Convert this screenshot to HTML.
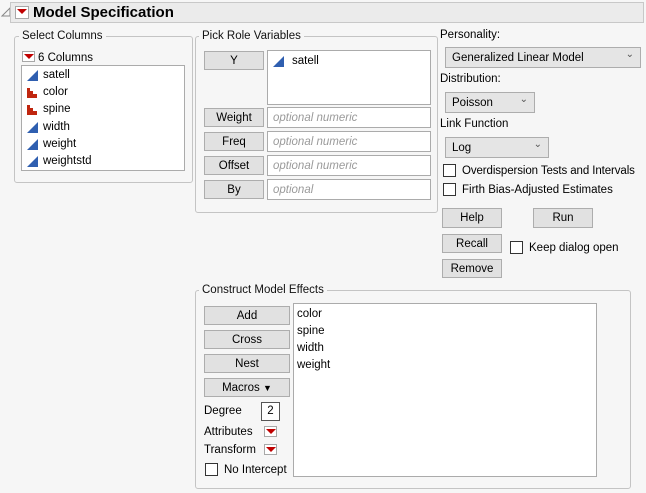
<!DOCTYPE html>
<html><head><style>
*{margin:0;padding:0;box-sizing:border-box}
body{width:646px;height:493px;background:#f6f6f6;font-family:"Liberation Sans",sans-serif;font-size:11.5px;color:#000;position:relative;overflow:hidden}
.a{position:absolute}
.frame{position:absolute;border:1px solid #c4c4c4;border-radius:3px}
.leg{position:absolute;background:#f6f6f6;padding:0 3px;font-size:11.5px;line-height:13px;color:#111}
.btn{position:absolute;background:#e1e1e1;border:1px solid #adadad;text-align:center;font-size:11.5px;line-height:18px}
.box{position:absolute;background:#fff;border:1px solid #ababab}
.ph{position:absolute;font-style:italic;color:#9a9a9a;font-size:11.5px;line-height:20px;left:5px}
.red{position:absolute;width:13px;height:11px;background:#fff;border:1px solid #a8a8a8}
.red:after{content:"";position:absolute;left:1px;top:2px;border-left:5px solid transparent;border-right:5px solid transparent;border-top:5px solid #c00000}
.chk{position:absolute;width:13px;height:13px;background:#fff;border:1px solid #333}
.dd{position:absolute;background:#e5e5e5;border:1px solid #adadad;line-height:20px;padding-left:6px}
.dd:after{content:"⌄";position:absolute;right:6px;top:-3px;font-size:10px;color:#555}
.t{position:absolute;line-height:16px}
</style></head><body>
<svg class="a" style="left:1px;top:7px" width="10" height="10"><polygon points="1,9 9,1 9,9" fill="none" stroke="#888"/></svg>
<div class="a" style="left:10px;top:2px;width:634px;height:21px;background:#ebebeb;border:1px solid #c8c8c8"></div>
<div class="red" style="left:15px;top:6px;width:14px;height:13px"></div>
<div class="a" style="left:33px;top:4px;font-weight:bold;font-size:15px;line-height:18px">Model Specification</div>

<div class="frame" style="left:14px;top:36px;width:179px;height:147px"></div>
<div class="leg" style="left:19px;top:30px">Select Columns</div>
<div class="red" style="left:22px;top:51px"></div>
<div class="t" style="left:38px;top:50px">6 Columns</div>
<div class="box" style="left:21px;top:65px;width:164px;height:106px"></div>
<svg class="a" style="left:26px;top:68px" width="14" height="100">
<polygon points="1,13 12,2 12,13" fill="#2f5fb0"/>
<g fill="#c0260f"><rect x="1" y="20" width="3" height="10"/><rect x="4" y="23" width="3" height="7"/><rect x="7" y="26" width="4" height="4"/>
<rect x="1" y="37" width="3" height="10"/><rect x="4" y="40" width="3" height="7"/><rect x="7" y="43" width="4" height="4"/></g>
<polygon points="1,65 12,54 12,65" fill="#2f5fb0"/>
<polygon points="1,82 12,71 12,82" fill="#2f5fb0"/>
<polygon points="1,99 12,88 12,99" fill="#2f5fb0"/>
</svg>
<div class="t" style="left:43px;top:67px">satell</div>
<div class="t" style="left:43px;top:84px">color</div>
<div class="t" style="left:43px;top:101px">spine</div>
<div class="t" style="left:43px;top:119px">width</div>
<div class="t" style="left:43px;top:136px">weight</div>
<div class="t" style="left:43px;top:153px">weightstd</div>

<div class="frame" style="left:195px;top:36px;width:243px;height:177px"></div>
<div class="leg" style="left:199px;top:30px">Pick Role Variables</div>
<div class="btn" style="left:204px;top:51px;width:60px;height:19px">Y</div>
<div class="box" style="left:267px;top:50px;width:164px;height:55px"></div>
<svg class="a" style="left:272px;top:54px" width="14" height="14"><polygon points="1,13 12,2 12,13" fill="#2f5fb0"/></svg>
<div class="t" style="left:292px;top:53px">satell</div>
<div class="btn" style="left:204px;top:108px;width:60px;height:19px">Weight</div>
<div class="box" style="left:267px;top:107px;width:164px;height:21px"><span class="ph">optional numeric</span></div>
<div class="btn" style="left:204px;top:132px;width:60px;height:19px">Freq</div>
<div class="box" style="left:267px;top:131px;width:164px;height:21px"><span class="ph">optional numeric</span></div>
<div class="btn" style="left:204px;top:156px;width:60px;height:19px">Offset</div>
<div class="box" style="left:267px;top:155px;width:164px;height:21px"><span class="ph">optional numeric</span></div>
<div class="btn" style="left:204px;top:180px;width:60px;height:19px">By</div>
<div class="box" style="left:267px;top:179px;width:164px;height:21px"><span class="ph">optional</span></div>

<div class="t" style="left:440px;top:27px">Personality:</div>
<div class="dd" style="left:445px;top:47px;width:196px;height:21px">Generalized Linear Model</div>
<div class="t" style="left:440px;top:71px">Distribution:</div>
<div class="dd" style="left:445px;top:92px;width:90px;height:21px">Poisson</div>
<div class="t" style="left:440px;top:116px">Link Function</div>
<div class="dd" style="left:445px;top:137px;width:104px;height:21px">Log</div>
<div class="chk" style="left:443px;top:164px"></div>
<div class="t" style="left:462px;top:163px;letter-spacing:-0.1px">Overdispersion Tests and Intervals</div>
<div class="chk" style="left:443px;top:183px"></div>
<div class="t" style="left:462px;top:182px">Firth Bias-Adjusted Estimates</div>
<div class="btn" style="left:442px;top:208px;width:60px;height:20px">Help</div>
<div class="btn" style="left:533px;top:208px;width:60px;height:20px">Run</div>
<div class="btn" style="left:442px;top:234px;width:60px;height:19px">Recall</div>
<div class="chk" style="left:510px;top:241px"></div>
<div class="t" style="left:529px;top:240px">Keep dialog open</div>
<div class="btn" style="left:442px;top:259px;width:60px;height:19px">Remove</div>

<div class="frame" style="left:195px;top:290px;width:436px;height:199px"></div>
<div class="leg" style="left:199px;top:284px">Construct Model Effects</div>
<div class="btn" style="left:204px;top:306px;width:86px;height:19px">Add</div>
<div class="btn" style="left:204px;top:330px;width:86px;height:19px">Cross</div>
<div class="btn" style="left:204px;top:354px;width:86px;height:19px">Nest</div>
<div class="btn" style="left:204px;top:378px;width:86px;height:19px">Macros <span style="font-size:9px">▼</span></div>
<div class="t" style="left:204px;top:403px">Degree</div>
<div class="box" style="left:261px;top:402px;width:19px;height:19px;border-color:#555;text-align:center;line-height:17px">2</div>
<div class="t" style="left:204px;top:424px">Attributes</div>
<div class="red" style="left:264px;top:426px"></div>
<div class="t" style="left:204px;top:442px">Transform</div>
<div class="red" style="left:264px;top:444px"></div>
<div class="chk" style="left:205px;top:463px"></div>
<div class="t" style="left:224px;top:462px">No Intercept</div>
<div class="box" style="left:293px;top:303px;width:304px;height:174px"></div>
<div class="t" style="left:297px;top:306px">color</div>
<div class="t" style="left:297px;top:323px">spine</div>
<div class="t" style="left:297px;top:340px">width</div>
<div class="t" style="left:297px;top:357px">weight</div>
</body></html>
